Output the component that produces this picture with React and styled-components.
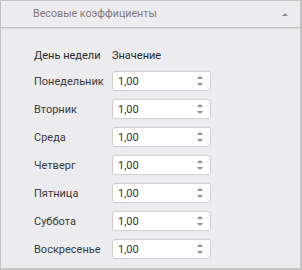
import React from 'react';
import styled, { createGlobalStyle } from 'styled-components';

const GlobalStyle = createGlobalStyle`
  html, body {
    margin: 0;
    padding: 0;
    background: #ffffff;
  }
  body {
    font-family: Roboto, "Open Sans", Arial, sans-serif;
  }
`;

const Panel = styled.section`
  width: 302px;
  height: 270px;
  box-sizing: border-box;
  border: 1px solid #c6c6c6;
  border-right-width: 2px;
  border-bottom-width: 2px;
  background: #ececee;
  display: flex;
  flex-direction: column;
`;

const Header = styled.header`
  height: 27px;
  flex: none;
  display: flex;
  align-items: center;
  justify-content: space-between;
  padding: 0 12px 1px 32px;
  box-sizing: border-box;
  border-bottom: 1px solid #c3c3c5;
  box-shadow: 0 1px 2px rgba(0, 0, 0, 0.08);
  color: #857878;
  font-size: 10.7px;
`;

const Caret = styled.span`
  width: 0;
  height: 0;
  border-left: 3px solid transparent;
  border-right: 3px solid transparent;
  border-bottom: 3px solid #8f8f8f;
  margin-top: 2px;
`;

const Body = styled.div`
  padding: 15px 0 0 33px;
  display: grid;
  grid-template-columns: 69px 99px;
  grid-template-rows: 24px;
  grid-auto-rows: 28px;
  justify-content: start;
  column-gap: 9px;
  align-items: center;
  font-size: 11px;
  color: #333;
`;

const HeadCell = styled.div`
  color: #2a2a2a;
  white-space: nowrap;
`;

const Label = styled.div`
  color: #3a3a3a;
  white-space: nowrap;
`;

const Field = styled.div`
  height: 20px;
  box-sizing: border-box;
  border: 1px solid #cfcfd1;
  border-radius: 3px;
  background: #fff;
  display: flex;
  align-items: center;
  justify-content: space-between;
  padding: 0 7px 0 5px;
`;

const Value = styled.span`
  color: #333;
`;

const Spin = styled.span`
  display: flex;
  flex-direction: column;
  gap: 4px;
  &::before, &::after {
    content: '';
    width: 0;
    height: 0;
    border-left: 3px solid transparent;
    border-right: 3px solid transparent;
  }
  &::before { border-bottom: 3px solid #8a8a8a; }
  &::after { border-top: 3px solid #8a8a8a; }
`;

const days = ['Понедельник', 'Вторник', 'Среда', 'Четверг', 'Пятница', 'Суббота', 'Воскресенье'];

export default function App() {
  return (
    <>
      <GlobalStyle />
      <Panel>
        <Header>
          <span>Весовые коэффициенты</span>
          <Caret />
        </Header>
        <Body>
          <HeadCell>День недели</HeadCell>
          <HeadCell>Значение</HeadCell>
          {days.map(d => (
            <React.Fragment key={d}>
              <Label>{d}</Label>
              <Field>
                <Value>1,00</Value>
                <Spin />
              </Field>
            </React.Fragment>
          ))}
        </Body>
      </Panel>
    </>
  );
}
